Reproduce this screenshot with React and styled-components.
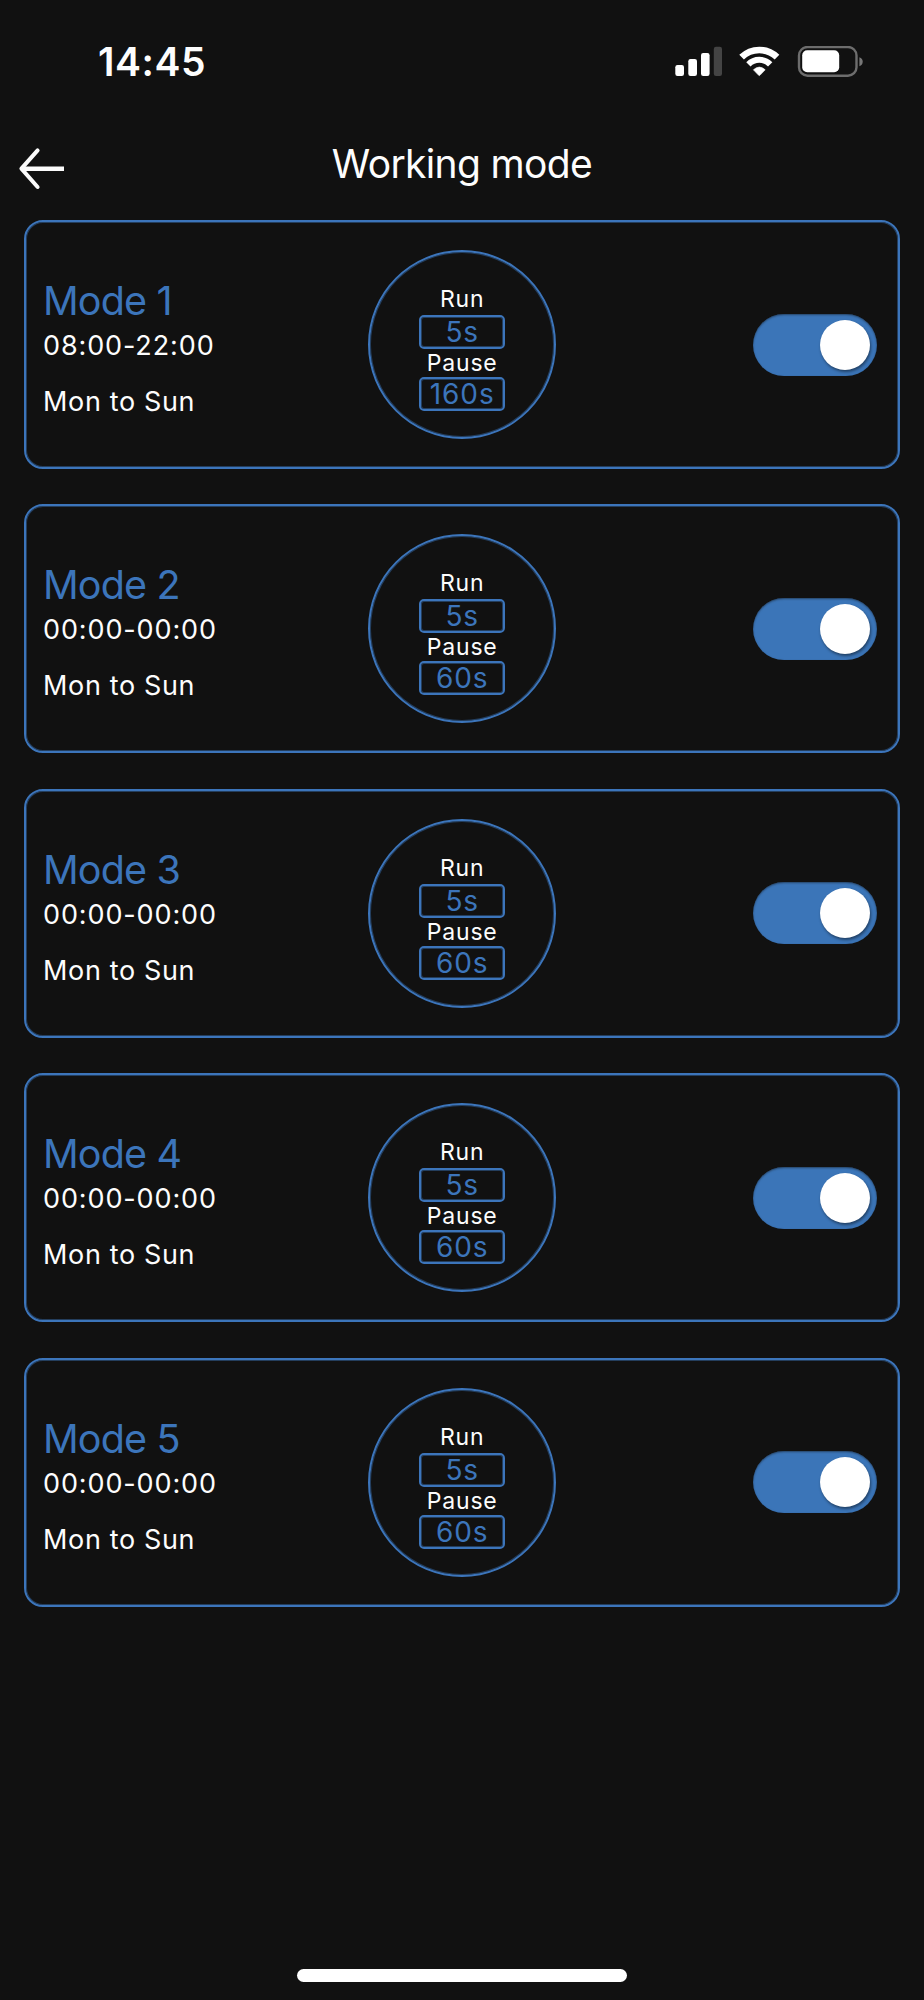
import React, { useState } from "react";
import styled, { createGlobalStyle } from "styled-components";

const BLUE = "#3c75bb";
const BLUE_SOFT = "rgba(60, 117, 187, 0.45)";

const GlobalStyle = createGlobalStyle`
  *, *::before, *::after { box-sizing: border-box; }
  body {
    margin: 0;
    background: #111111;
    color: #fdfdfd;
    font-family: Inter, "Liberation Sans", sans-serif;
  }
`;

const Screen = styled.div`
  width: 924px;
  height: 2000px;
  display: flex;
  flex-direction: column;
  background: #111111;
  overflow: hidden;
`;

const StatusBar = styled.div`
  height: 124px;
  padding: 0 61px 0 98px;
  display: flex;
  align-items: center;
  justify-content: space-between;
`;

const Clock = styled.span`
  font-size: 39px;
  font-weight: 600;
  line-height: 46px;
  letter-spacing: 0.5px;
`;

const StatusIcons = styled.div`
  display: flex;
  align-items: center;
  gap: 17px;
`;

const TitleBar = styled.header`
  height: 96px;
  padding: 0 18px;
  display: grid;
  grid-template-columns: 48px 1fr 48px;
`;

const BackButton = styled.button`
  margin: 23px 0 0;
  padding: 0;
  width: 48px;
  height: 44px;
  border: 0;
  background: none;
  color: #fbfbfb;

  svg { display: block; }
`;

const Title = styled.h1`
  margin: 17px 0 0;
  text-align: center;
  font-size: 39px;
  font-weight: 400;
  line-height: 46px;
  letter-spacing: -0.65px;
`;

const ModeList = styled.main`
  flex: 1;
  padding: 0 23.6px 0 24px;
  display: flex;
  flex-direction: column;
  gap: 35.4px;
`;

const Card = styled.section`
  height: 249px;
  flex: none;
  padding: 0 21px 0 17px;
  display: grid;
  grid-template-columns: 1fr 188px 1fr;
  align-items: center;
  border: 2px solid ${BLUE};
  border-radius: 19px;
  box-shadow: inset 0 0 0 1px ${BLUE_SOFT};
`;

const Schedule = styled.div`
  align-self: start;
  padding-top: 56px;
  display: flex;
  flex-direction: column;
  white-space: nowrap;
`;

const ModeName = styled.h2`
  margin: 0 0 1px;
  color: ${BLUE};
  font-size: 39.5px;
  font-weight: 400;
  line-height: 46px;
  letter-spacing: -0.85px;
`;

const ScheduleLine = styled.span`
  font-size: 27px;
  line-height: 42px;
  letter-spacing: ${(p) => (p.$days ? 0.65 : 0.88)}px;
  margin-top: ${(p) => (p.$days ? 14 : 0)}px;
`;

const Cycle = styled.div`
  width: 188px;
  height: 189px;
  margin-left: 2px;
  padding-top: 33px;
  display: flex;
  flex-direction: column;
  align-items: center;
  border: 2px solid ${BLUE};
  border-radius: 50%;
  box-shadow: inset 0 0 0 1px ${BLUE_SOFT};
`;

const CycleLabel = styled.span`
  font-size: 23px;
  line-height: 28px;
  letter-spacing: 0.8px;

  &:first-child { margin-bottom: 2px; }
`;

const Duration = styled.span`
  width: 86px;
  height: 34px;
  border: 2px solid ${BLUE};
  border-radius: 5px;
  box-shadow: inset 0 0 0 1px ${BLUE_SOFT};
  color: ${BLUE};
  text-align: center;
  font-size: 28px;
  line-height: 31px;
  letter-spacing: 0.9px;
`;

const Toggle = styled.button`
  justify-self: end;
  width: 124px;
  height: 62px;
  padding: 6px 7px;
  display: flex;
  align-items: center;
  justify-content: ${(p) => (p.$on ? "flex-end" : "flex-start")};
  border: 0;
  border-radius: 31px;
  background: ${(p) => (p.$on ? "#3b75b8" : "#444444")};
  box-shadow: inset 0 1px 2px rgba(17, 17, 17, 0.5);
`;

const Knob = styled.span`
  width: 50px;
  height: 50px;
  border-radius: 50%;
  background: #ffffff;
  box-shadow: 1px 2px 3px rgba(0, 0, 0, 0.45);
`;

const HomeIndicator = styled.div`
  width: 330px;
  height: 13px;
  margin: 0 auto 18px;
  border-radius: 7px;
  background: #ffffff;
`;

const SignalIcon = () => (
  <svg width="47" height="32" viewBox="675 46 47 32" fill="#fff">
    <rect x="675.3" y="65" width="8.7" height="11" rx="2.2" />
    <rect x="688.3" y="59" width="8.7" height="17" rx="2.2" />
    <rect x="701" y="53" width="8.6" height="23" rx="2.2" />
    <rect x="713.8" y="46.7" width="8.2" height="29.3" rx="2.2" fill="#444" />
  </svg>
);

const WifiIcon = () => (
  <svg width="41" height="32" viewBox="739 46 41 32" fill="none" stroke="#fff">
    <path d="M741.6 57.2A25.2 25.2 0 0 1 777 57.2" strokeWidth="6.6" />
    <path d="M748.4 64.4A15.2 15.2 0 0 1 770.2 64.4" strokeWidth="6" />
    <path
      d="M753.4 69.8Q759.3 64.4 765.2 69.8L759.9 75.3Q759.3 75.9 758.7 75.3Z"
      fill="#fff"
      strokeWidth="0.6"
      strokeLinejoin="round"
    />
  </svg>
);

const BatteryIcon = () => (
  <svg width="66" height="32" viewBox="796 46 66 32">
    <rect x="798" y="47" width="57.5" height="28.7" rx="8.5" fill="none" stroke="#6d6d6d" strokeWidth="2.4" />
    <rect x="801.2" y="50.2" width="37" height="22" rx="5" fill="#fff" />
    <path d="M858.4 57.2C862.8 58.6 862.8 64.8 858.4 66.2Z" fill="#777" />
  </svg>
);

const BackArrow = () => (
  <svg width="48" height="44" viewBox="18 147 48 44" fill="none" stroke="currentColor" strokeWidth="4">
    <path d="M22 168.7H64" strokeWidth="4.4" />
    <path d="M37.6 150.4L21.4 168.7L37.6 187" strokeLinecap="round" strokeLinejoin="round" />
  </svg>
);

const modes = [
  { name: "Mode 1", hours: "08:00-22:00", days: "Mon to Sun", run: "5s", pause: "160s" },
  { name: "Mode 2", hours: "00:00-00:00", days: "Mon to Sun", run: "5s", pause: "60s" },
  { name: "Mode 3", hours: "00:00-00:00", days: "Mon to Sun", run: "5s", pause: "60s" },
  { name: "Mode 4", hours: "00:00-00:00", days: "Mon to Sun", run: "5s", pause: "60s" },
  { name: "Mode 5", hours: "00:00-00:00", days: "Mon to Sun", run: "5s", pause: "60s" },
];

function ModeCard({ mode }) {
  const [on, setOn] = useState(true);
  return (
    <Card>
      <Schedule>
        <ModeName>{mode.name}</ModeName>
        <ScheduleLine>{mode.hours}</ScheduleLine>
        <ScheduleLine $days>{mode.days}</ScheduleLine>
      </Schedule>
      <Cycle>
        <CycleLabel>Run</CycleLabel>
        <Duration>{mode.run}</Duration>
        <CycleLabel>Pause</CycleLabel>
        <Duration>{mode.pause}</Duration>
      </Cycle>
      <Toggle
        $on={on}
        role="switch"
        aria-checked={on}
        aria-label={mode.name}
        onClick={() => setOn(!on)}
      >
        <Knob />
      </Toggle>
    </Card>
  );
}

export default function App() {
  return (
    <>
      <GlobalStyle />
      <Screen>
        <StatusBar>
          <Clock>14:45</Clock>
          <StatusIcons>
            <SignalIcon />
            <WifiIcon />
            <BatteryIcon />
          </StatusIcons>
        </StatusBar>
        <TitleBar>
          <BackButton aria-label="Back">
            <BackArrow />
          </BackButton>
          <Title>Working mode</Title>
        </TitleBar>
        <ModeList>
          {modes.map((mode) => (
            <ModeCard key={mode.name} mode={mode} />
          ))}
        </ModeList>
        <HomeIndicator />
      </Screen>
    </>
  );
}
